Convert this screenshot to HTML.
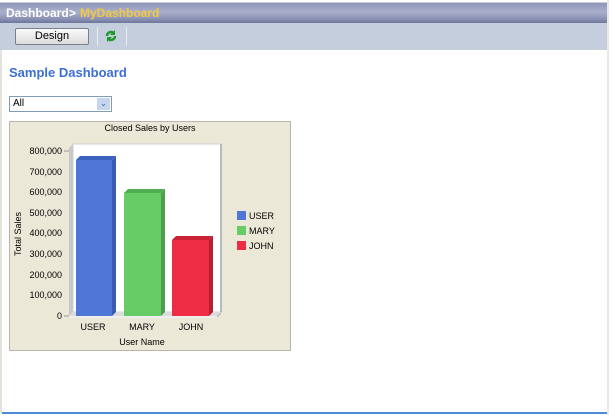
<!DOCTYPE html>
<html><head><meta charset="utf-8"><style>
*{margin:0;padding:0;box-sizing:border-box}
body{width:615px;height:419px;background:#fff;font-family:"Liberation Sans",Arial,sans-serif;position:relative;overflow:hidden}
.hdr{position:absolute;left:0;top:2px;width:608px;height:21px;background:linear-gradient(#8f96b8,#a9afca 45%,#8a91b4 80%,#6d759c);border-top:1px solid #c8cbe0}
.hdr span{position:absolute;top:3px;font-size:12px;font-weight:bold}
.tb{position:absolute;left:0;top:23px;width:608px;height:27px;background:#c5cedd}
.btn{position:absolute;left:15px;top:5px;width:74px;height:17px;border:1px solid #7a7f8c;border-radius:2px;background:linear-gradient(#fafafa,#dcdcdc);font-size:11px;text-align:center;line-height:15px}
.sep{position:absolute;top:4px;width:1px;height:19px;background:#9aa3b5;border-right:1px solid #e8ecf2}
.title{position:absolute;left:9px;top:65px;color:#3d6ed6;font-size:13px;font-weight:bold}
.sel{position:absolute;left:9px;top:96px;width:103px;height:16px;border:1px solid #7f9db9;background:#fff;font-size:10px;line-height:14px;padding-left:3px}
.sel i{position:absolute;right:1px;top:1px;width:13px;height:12px;background:#c6d4f0;color:#3b5aa0;font-style:normal;font-size:8px;text-align:center;line-height:12px}
.rb{position:absolute;left:607px;top:0;width:2px;height:415px;background:#eceae0}
.bl{position:absolute;left:2px;top:412px;width:605px;height:2px;background:#4a8ad6}
.lb{position:absolute;left:0;top:50px;width:2px;height:363px;background:#e4e2da}
</style></head><body>
<div class="hdr"><span style="left:6px;color:#fff">Dashboard</span><span style="left:69px;color:#fff">&gt;</span><span style="left:80px;color:#f5c842">MyDashboard</span></div>
<div class="tb"><div class="btn">Design</div><div class="sep" style="left:97px"></div>
<svg style="position:absolute;left:104px;top:6px" width="14" height="14" viewBox="0 0 14 14"><path d="M3 7a4 4 0 0 1 7-2.6" stroke="#1e9a2a" stroke-width="2.4" fill="none"/><path d="M11 1v5H6z" fill="#1e9a2a"/><path d="M11 7a4 4 0 0 1-7 2.6" stroke="#1e9a2a" stroke-width="2.4" fill="none"/><path d="M3 13V8h5z" fill="#1e9a2a"/></svg>
<div class="sep" style="left:126px"></div></div>
<div class="lb"></div><div class="rb"></div><div class="bl"></div>
<div class="title">Sample Dashboard</div>
<div class="sel">All<i>&#8964;</i></div>
<svg style="position:absolute;left:9px;top:121px" width="283" height="231" viewBox="9 121 283 231" font-family="Liberation Sans,Arial,sans-serif" font-size="9">
<rect x="9.5" y="121.5" width="281" height="229" fill="#ebe8d8" stroke="#b8b6a8"/>
<text x="150" y="131" text-anchor="middle">Closed Sales by Users</text>
<rect x="73" y="144" width="148" height="168" fill="#fff" stroke="#d0d0d0"/>
<polygon points="69,148 73,144 73,312 69,316" fill="#c8c8c8"/>
<polygon points="69,316 73,312 221,312 217,316" fill="#dcdcdc"/>
<polygon points="217,316 221,312 221,314 217,318" fill="#bbb"/>
<rect x="69" y="316" width="148" height="2" fill="#eee"/>
<line x1="221" y1="144" x2="221" y2="312" stroke="#bbb" stroke-width="2"/>
<g text-anchor="end">
<text x="62" y="154">800,000</text><text x="62" y="175">700,000</text><text x="62" y="195">600,000</text><text x="62" y="216">500,000</text><text x="62" y="236">400,000</text><text x="62" y="257">300,000</text><text x="62" y="278">200,000</text><text x="62" y="298">100,000</text><text x="62" y="319">0</text></g>
<g stroke="#999"><line x1="64" y1="151" x2="69" y2="151"/><line x1="64" y1="316" x2="69" y2="316"/></g>
<rect x="76" y="160" width="36" height="156" fill="#5077d8"/><polygon points="76,160 80,156 116,156 112,160" fill="#3c62c0"/><polygon points="112,160 116,156 116,312 112,316" fill="#3a5bb0"/>
<rect x="124" y="193" width="37" height="123" fill="#66cc66"/><polygon points="124,193 128,189 165,189 161,193" fill="#4fae4f"/><polygon points="161,193 165,189 165,312 161,316" fill="#4ea04e"/>
<rect x="172" y="240" width="37" height="76" fill="#ee2d44"/><polygon points="172,240 176,236 213,236 209,240" fill="#cc2235"/><polygon points="209,240 213,236 213,312 209,316" fill="#b52031"/>
<text x="93" y="330" text-anchor="middle">USER</text><text x="142" y="330" text-anchor="middle">MARY</text><text x="191" y="330" text-anchor="middle">JOHN</text>
<text x="142" y="345" text-anchor="middle">User Name</text>
<text transform="translate(21,234) rotate(-90)" text-anchor="middle">Total Sales</text>
<rect x="237" y="211" width="9" height="9" fill="#5077d8"/><text x="249" y="219">USER</text>
<rect x="237" y="226" width="9" height="9" fill="#66cc66"/><text x="249" y="234">MARY</text>
<rect x="237" y="241" width="9" height="9" fill="#ee2d44"/><text x="249" y="249">JOHN</text>
</svg>
</body></html>
